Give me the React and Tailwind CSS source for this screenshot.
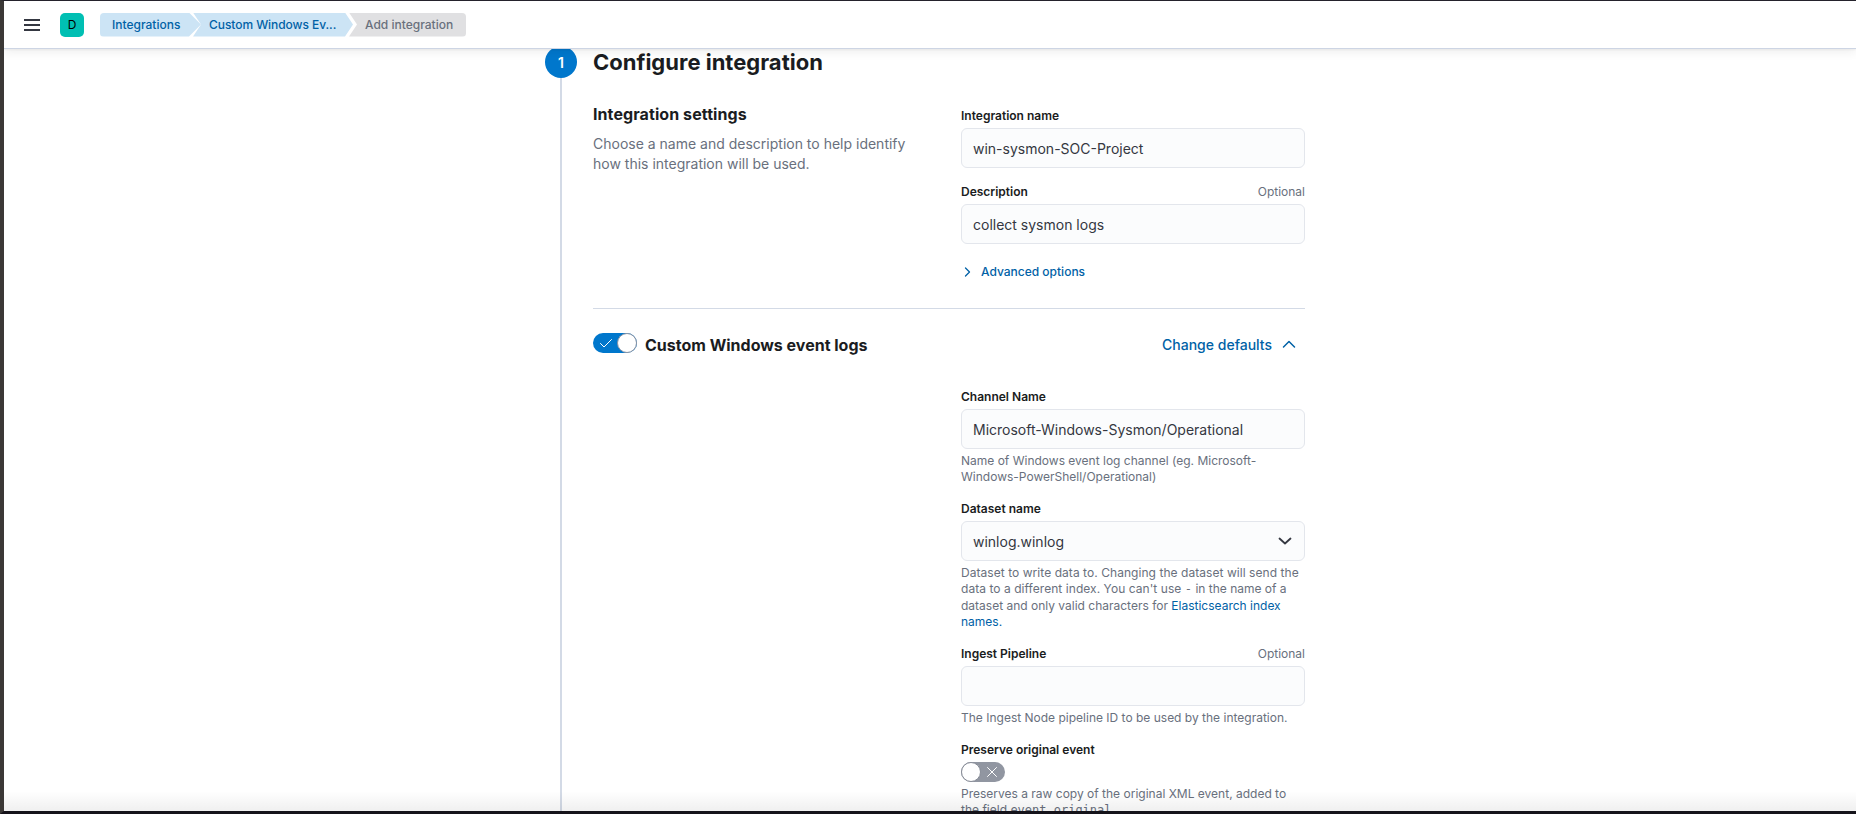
function Breadcrumb({ children, kind }) {
  const look =
    kind === 'first'
      ? 'w-[101px] bg-[#cce4f5] text-[#0061a6] pl-3 rounded-l-[4px] [clip-path:polygon(0_0,89px_0,100%_50%,89px_100%,0_100%)]'
      : kind === 'middle'
        ? 'w-[160px] bg-[#cce4f5] text-[#0061a6] pl-4 tracking-[-0.005em] [clip-path:polygon(0_0,152px_0,100%_50%,152px_100%,0_100%,8px_50%)] -ml-2'
        : 'w-[117px] bg-[#e0e0e2] text-[#69707d] pl-4 rounded-r-[4px] [clip-path:polygon(0_0,100%_0,100%_100%,0_100%,8px_50%)] -ml-1'
  return (
    <a className={`flex h-6 items-center whitespace-nowrap text-[12px] font-medium ${look}`}>{children}</a>
  )
}

function Label({ children, optional }) {
  return (
    <div className="flex h-[21px] justify-between text-[12px] leading-[18px]">
      <span className="font-semibold text-[#1a1c21]">{children}</span>
      {optional && <span className="text-[#69707d]">Optional</span>}
    </div>
  )
}

function Field({ value, select }) {
  return (
    <div className="flex h-10 items-center justify-between rounded-[6px] border border-[#e3e6ec] bg-[#fbfcfd] pr-3 pl-[11px] text-[14px] text-[#343741]">
      <span>{value}</span>
      {select && (
        <svg width="14" height="14" viewBox="0 0 14 14" fill="none" stroke="#343741" strokeWidth="1.800" strokeLinecap="round" strokeLinejoin="round">
          <path d="M1.500 4.500 7 9.500l5.500-5" />
        </svg>
      )}
    </div>
  )
}

function Help({ children }) {
  return <p className="pt-1 text-[12px] leading-4 text-[#69707d]">{children}</p>
}

function Switch({ on }) {
  return on ? (
    <svg className="shrink-0" width="44" height="20" viewBox="0 0 44 20" fill="none">
      <rect width="44" height="20" rx="10" fill="#0077cc" />
      <path d="m7.500 10.500 3.500 3.500 7.500-7.500" stroke="#fff" strokeLinecap="round" strokeLinejoin="round" />
      <circle cx="34" cy="10" r="9.500" fill="#fff" stroke="#8b93a3" />
    </svg>
  ) : (
    <svg className="shrink-0" width="44" height="20" viewBox="0 0 44 20" fill="none">
      <rect width="44" height="20" rx="10" fill="#9196a1" />
      <path d="m26.500 5.500 9 9m0-9-9 9" stroke="#fff" strokeLinecap="round" />
      <circle cx="10" cy="10" r="9.500" fill="#fff" stroke="#878c97" />
    </svg>
  )
}

export default function App() {
  return (
    <div className="flex h-[814px] w-[1856px] flex-col overflow-hidden border-t border-b-[3px] border-l-4 border-t-[#24222c] border-b-[#15131a] border-l-[#3b3836] bg-white font-['Inter',sans-serif]">
      <header className="relative z-10 flex h-12 shrink-0 items-center border-b border-[#cdd5e4] bg-white pl-5 shadow-[0_1px_2px_rgba(0,0,0,0.05),0_3px_10px_rgba(0,0,0,0.07)]">
        <svg width="16" height="12" viewBox="0 0 16 12" fill="#343741">
          <path d="M0 0h16v2H0zM0 5h16v2H0zM0 10h16v2H0z" />
        </svg>
        <span className="ml-5 flex size-6 items-center justify-center rounded-[5px] bg-[#00bfb3] text-[12px] text-black">D</span>
        <nav className="ml-4 flex">
          <Breadcrumb kind="first">Integrations</Breadcrumb>
          <Breadcrumb kind="middle">Custom Windows Ev...</Breadcrumb>
          <Breadcrumb kind="last">Add integration</Breadcrumb>
        </nav>
      </header>

      <main className="flex min-h-0 flex-1 pl-[541px]">
        <div className="-mt-[3px] flex w-8 shrink-0 flex-col items-center">
          <span className="flex size-8 shrink-0 items-center justify-center rounded-full bg-[#0077cc] text-[14px] font-semibold text-white">1</span>
          <span className="w-0.5 flex-1 bg-[#d3dae6]" />
        </div>

        <div className="ml-4 w-[712px] shrink-0">
          <h2 className="-mt-[3px] h-[61px] text-[22px] leading-8 font-bold text-[#1a1c21]">Configure integration</h2>

          <section className="grid h-[201px] grid-cols-[344px_344px] gap-6">
            <div className="-mt-[5px]">
              <h3 className="text-[16px] leading-6 font-bold tracking-[0.005em] text-[#1a1c21]">Integration settings</h3>
              <p className="mt-2 w-[320px] text-[14px] leading-5 text-[#69707d]">Choose a name and description to help identify how this integration will be used.</p>
            </div>
            <div>
              <Label>Integration name</Label>
              <Field value="win-sysmon-SOC-Project" />
              <div className="mt-[15px]">
                <Label optional>Description</Label>
                <Field value="collect sysmon logs" />
              </div>
              <a className="mt-4 flex h-6 items-center gap-[10px] pl-[3px] text-[12px] font-medium text-[#0061a6]">
                <svg width="7" height="12" viewBox="0 0 7 12" fill="none" stroke="currentColor" strokeWidth="1.300" strokeLinecap="round" strokeLinejoin="round">
                  <path d="m1.500 2 4 4-4 4" />
                </svg>
                Advanced options
              </a>
            </div>
          </section>

          <hr className="border-[#d3dae6]" />

          <div className="flex h-[79px] items-start pt-6">
            <Switch on />
            <h3 className="ml-2 text-[16px] leading-6 font-bold text-[#1a1c21]">Custom Windows event logs</h3>
            <a className="ml-auto flex h-[22px] items-center gap-[10px] pr-[9px] text-[14px] font-medium text-[#0061a6]">
              Change defaults
              <svg width="14" height="10" viewBox="0 0 14 10" fill="none" stroke="currentColor" strokeWidth="1.500" strokeLinecap="round" strokeLinejoin="round">
                <path d="m1.500 8 5.500-5.500L12.500 8" />
              </svg>
            </a>
          </div>

          <div className="ml-auto flex w-[344px] flex-col">
            <div className="h-28">
              <Label>Channel Name</Label>
              <Field value="Microsoft-Windows-Sysmon/Operational" />
              <Help>Name of Windows event log channel (eg. Microsoft-Windows-PowerShell/Operational)</Help>
            </div>
            <div className="h-[145px]">
              <Label>Dataset name</Label>
              <Field value="winlog.winlog" select />
              <Help>
                <span className="tracking-[0.0045em]">Dataset to write data to. Changing the dataset will send the data to a different index. You can't use </span>
                <code className="inline-block h-[17px] align-top font-['DejaVu_Sans_Mono',monospace] text-[12px]">-</code> in the name of a dataset and only valid characters for <a className="text-[#0061a6]">Elasticsearch index names.</a>
              </Help>
            </div>
            <div className="h-24">
              <Label optional>Ingest Pipeline</Label>
              <Field />
              <Help>The Ingest Node pipeline ID to be used by the integration.</Help>
            </div>
            <div>
              <Label>Preserve original event</Label>
              <Switch />
              <Help>
                Preserves a raw copy of the original XML event, added to the field <code className="font-['DejaVu_Sans_Mono',monospace] text-[12px]">event.original</code>
              </Help>
            </div>
          </div>
        </div>
      </main>
      <div className="relative z-10 -mt-5 h-5 shrink-0 bg-linear-to-t from-black/6 to-transparent" />
    </div>
  )
}
